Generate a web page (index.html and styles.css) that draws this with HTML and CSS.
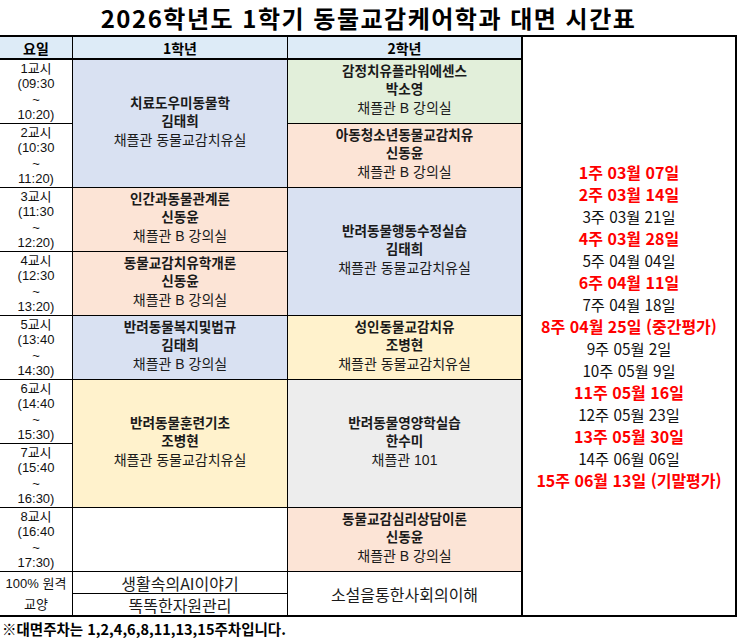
FILE: index.html
```html
<!DOCTYPE html>
<html lang="ko">
<head>
<meta charset="utf-8">
<title>2026학년도 1학기 동물교감케어학과 대면 시간표</title>
<link rel="stylesheet" href="styles.css">
</head>
<body>
<div class="page">
  <h1 class="title">2026학년도 1학기 동물교감케어학과 대면 시간표</h1>
  <div class="sheet">
    <div class="hd c1 r1">요일</div>
    <div class="hd c2 r1">1학년</div>
    <div class="hd c3 r1">2학년</div>

    <div class="dates">
      <div class="red">1주 03월 07일</div>
      <div class="red">2주 03월 14일</div>
      <div>3주 03월 21일</div>
      <div class="red">4주 03월 28일</div>
      <div>5주 04월 04일</div>
      <div class="red">6주 04월 11일</div>
      <div>7주 04월 18일</div>
      <div class="red">8주 04월 25일 (중간평가)</div>
      <div>9주 05월 2일</div>
      <div>10주 05월 9일</div>
      <div class="red">11주 05월 16일</div>
      <div>12주 05월 23일</div>
      <div class="red">13주 05월 30일</div>
      <div>14주 06월 06일</div>
      <div class="red">15주 06월 13일 (기말평가)</div>
    </div>

    <div class="time c1 r2">1교시<br>(09:30<br>~<br>10:20)</div>
    <div class="time c1 r3">2교시<br>(10:30<br>~<br>11:20)</div>
    <div class="time c1 r4">3교시<br>(11:30<br>~<br>12:20)</div>
    <div class="time c1 r5">4교시<br>(12:30<br>~<br>13:20)</div>
    <div class="time c1 r6">5교시<br>(13:40<br>~<br>14:30)</div>
    <div class="time c1 r7">6교시<br>(14:40<br>~<br>15:30)</div>
    <div class="time c1 r8">7교시<br>(15:40<br>~<br>16:30)</div>
    <div class="time c1 r9">8교시<br>(16:40<br>~<br>17:30)</div>

    <div class="course lav c2 r2 span2"><b>치료도우미동물학</b><b>김태희</b><span>채플관 동물교감치유실</span></div>
    <div class="course peach c2 r4"><b>인간과동물관계론</b><b>신동윤</b><span>채플관 B 강의실</span></div>
    <div class="course peach c2 r5"><b>동물교감치유학개론</b><b>신동윤</b><span>채플관 B 강의실</span></div>
    <div class="course lav c2 r6"><b>반려동물복지및법규</b><b>김태희</b><span>채플관 B 강의실</span></div>
    <div class="course yellow c2 r7 span2"><b>반려동물훈련기초</b><b>조병현</b><span>채플관 동물교감치유실</span></div>
    <div class="course white c2 r9"></div>

    <div class="course green c3 r2"><b>감정치유플라워에센스</b><b>박소영</b><span>채플관 B 강의실</span></div>
    <div class="course peach c3 r3"><b>아동청소년동물교감치유</b><b>신동윤</b><span>채플관 B 강의실</span></div>
    <div class="course lav c3 r4 span2"><b>반려동물행동수정실습</b><b>김태희</b><span>채플관 동물교감치유실</span></div>
    <div class="course yellow c3 r6"><b>성인동물교감치유</b><b>조병현</b><span>채플관 동물교감치유실</span></div>
    <div class="course gray c3 r7 span2"><b>반려동물영양학실습</b><b>한수미</b><span>채플관 101</span></div>
    <div class="course peach c3 r9"><b>동물교감심리상담이론</b><b>신동윤</b><span>채플관 B 강의실</span></div>

    <div class="time c1 r10 span2 remote">100% 원격<br>교양</div>
    <div class="gen c2 r10">생활속의AI이야기</div>
    <div class="gen c2 r11">똑똑한자원관리</div>
    <div class="gen c3 r10 span2">소설을통한사회의이해</div>
  </div>
  <p class="note">※대면주차는 1,2,4,6,8,11,13,15주차입니다.</p>
</div>
</body>
</html>
```

FILE: styles.css
```css
html, body {
  margin: 0;
  padding: 0;
  background: #ffffff;
}

body {
  font-family: "Noto Sans CJK KR", "Noto Sans", sans-serif;
  color: #000000;
}

.page {
  width: 737px;
}

.title {
  margin: 0;
  height: 35px;
  display: flex;
  align-items: center;
  justify-content: center;
  font-size: 24px;
  font-weight: 700;
  letter-spacing: 1.5px;
  line-height: 1;
  padding-top: 1px;
  box-sizing: border-box;
}

.sheet {
  display: grid;
  grid-template-columns: 72px 214px 233px 213px;
  grid-template-rows: 22px repeat(8, 63px) 21px 21px;
  gap: 1px;
  background: #000000;
  border-top: 2px solid #000000;
  border-right: 2px solid #000000;
  border-bottom: 2px solid #000000;
}

.sheet > div {
  background: #ffffff;
  overflow: hidden;
}

.c1 { grid-column: 1; }
.c2 { grid-column: 2; }
.c3 { grid-column: 3; }
.r1 { grid-row-start: 1; }
.r2 { grid-row-start: 2; }
.r3 { grid-row-start: 3; }
.r4 { grid-row-start: 4; }
.r5 { grid-row-start: 5; }
.r6 { grid-row-start: 6; }
.r7 { grid-row-start: 7; }
.r8 { grid-row-start: 8; }
.r9 { grid-row-start: 9; }
.r10 { grid-row-start: 10; }
.r11 { grid-row-start: 11; }
.span2 { grid-row-end: span 2; }

.hd {
  background: #ddebf7 !important;
  border-bottom: 1px solid #000000;
  box-sizing: border-box;
  display: flex;
  align-items: center;
  justify-content: center;
  font-size: 14px;
  font-weight: 700;
  line-height: 1;
}

.dates {
  grid-column: 4;
  grid-row: 1 / 12;
  border-left: 1px solid #000000;
  display: flex;
  flex-direction: column;
  align-items: center;
  justify-content: center;
  font-family: "Liberation Sans", "Noto Sans CJK KR", sans-serif;
  font-size: 15.3px;
  line-height: 22px;
  color: #111111;
}

.dates div {
  font-family: "Noto Sans CJK KR", sans-serif;
  height: 22px;
}

.dates .red {
  color: #ff0000;
  font-weight: 700;
  font-size: 16px;
}

.time {
  display: flex;
  align-items: center;
  justify-content: center;
  text-align: center;
  font-family: "Liberation Sans", "Noto Sans CJK KR", sans-serif;
  font-size: 13px;
  line-height: 15.5px;
  color: #111111;
}

.remote {
  line-height: 21px;
}

.course {
  display: flex;
  flex-direction: column;
  align-items: center;
  justify-content: center;
  text-align: center;
  font-family: "Liberation Sans", "Noto Sans CJK KR", sans-serif;
  font-size: 13.6px;
  line-height: 18px;
  padding-bottom: 4px;
  box-sizing: border-box;
  color: #1a1a1a;
}

.course b {
  font-weight: 700;
}

.course span {
  font-size: 14px;
}

.lav { background: #d9e1f2 !important; }
.green { background: #e2efda !important; }
.peach { background: #fce4d6 !important; }
.yellow { background: #fff2cc !important; }
.gray { background: #ededed !important; }
.white { background: #ffffff !important; }

.gen {
  display: flex;
  align-items: center;
  justify-content: center;
  font-size: 16px;
  line-height: 1;
  color: #1a1a1a;
}

.note {
  margin: 0;
  padding: 3px 0 0 2px;
  font-size: 14.5px;
  font-weight: 700;
  line-height: 18px;
}
```
